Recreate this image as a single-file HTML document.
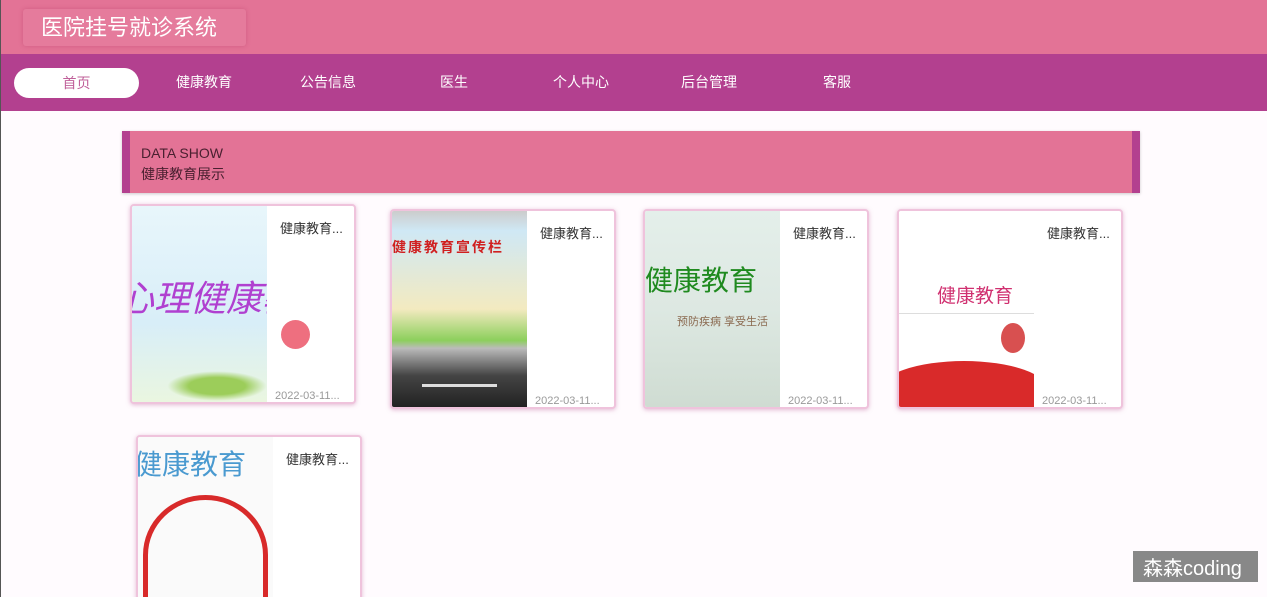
<!DOCTYPE html>
<html style="width:1267px;height:597px;overflow:hidden"><head><meta charset="utf-8"><style>
*{margin:0;padding:0;box-sizing:border-box}
html,body{width:1267px;height:597px;overflow:hidden}
body{background:#fffbfe;font-family:"Liberation Sans","Noto Sans CJK SC",sans-serif;position:relative;border-left:1px solid #555}
.hdr{position:absolute;left:0;top:0;width:1267px;height:54px;background:#e37396}
.title{position:absolute;left:22px;top:9px;width:223px;height:37px;background:#e57b9c;box-shadow:0 0 4px rgba(180,60,100,.4);color:#fff;font-size:22px;line-height:37px;padding-left:18px;border-radius:3px}
.nav{position:absolute;left:0;top:54px;width:1267px;height:57px;background:#b3408f}
.nav span{position:absolute;top:0;line-height:57px;color:#fff;font-size:14px}
.pill{position:absolute;left:13px;top:14px;width:125px;height:30px;background:#fff;border-radius:15px;color:#c0609a;text-align:center;line-height:30px;font-size:14px}
.ban{position:absolute;left:121px;top:131px;width:1018px;height:62px;background:#e37396;border-left:8px solid #b3408f;border-right:8px solid #b3408f;box-shadow:0 1px 3px rgba(0,0,0,.2);color:#4a2030;font-size:14px;padding:12px 0 0 11px;line-height:21px}
.card{position:absolute;width:226px;height:200px;background:#fff;border:2px solid #efc3dc;border-radius:4px;box-shadow:0 1px 4px rgba(200,120,170,.5);overflow:hidden}
.img{position:absolute;left:0;top:0;width:135px;height:100%;overflow:hidden}
.t{position:absolute;left:148px;top:12px;font-size:13px;color:#333}
.d{position:absolute;left:143px;top:184px;font-size:11px;color:#999}
</style></head><body>
<div class="hdr"><div class="title">医院挂号就诊系统</div></div>
<div class="nav"><div class="pill">首页</div>
<span style="left:175px">健康教育</span><span style="left:299px">公告信息</span><span style="left:439px">医生</span><span style="left:552px">个人中心</span><span style="left:680px">后台管理</span><span style="left:822px">客服</span></div>
<div class="ban">DATA SHOW<br>健康教育展示</div>

<div class="card" style="left:129px;top:204px">
<div class="img" style="background:linear-gradient(180deg,#e8f6fb,#d8eef8 60%,#eaf6e0)"><div style="position:absolute;left:-14px;top:64px;font-size:36px;color:#b040d0;font-style:italic;white-space:nowrap">心理健康教育</div><div style="position:absolute;left:35px;top:165px;width:100px;height:30px;background:radial-gradient(ellipse,#9ccd5a 40%,transparent 70%)"></div></div>
<div class="t">健康教育...</div><div class="d">2022-03-11...</div>
<div style="position:absolute;left:149px;top:114px;width:29px;height:29px;border-radius:50%;background:#ee6f7f"></div></div>

<div class="card" style="left:389px;top:209px">
<div class="img" style="background:linear-gradient(180deg,#ccc 0,#cfe8f5 10%,#f3eac0 50%,#8ccf5c 66%,#bbb 70%,#444 84%,#222)"><div style="position:absolute;left:0;top:26px;font-size:14px;font-weight:bold;color:#d02020;white-space:nowrap;letter-spacing:2px">健康教育宣传栏</div><div style="position:absolute;left:30px;top:173px;width:75px;height:3px;background:#ddd"></div></div>
<div class="t">健康教育...</div><div class="d">2022-03-11...</div></div>

<div class="card" style="left:642px;top:209px">
<div class="img" style="background:linear-gradient(180deg,#e4efea,#dde8e2 50%,#cfdcd2)"><div style="position:absolute;left:0;top:48px;font-size:28px;color:#1f8a1f;white-space:nowrap">健康教育</div><div style="position:absolute;left:32px;top:102px;font-size:11px;color:#8a6a50;white-space:nowrap">预防疾病 享受生活</div></div>
<div class="t">健康教育...</div><div class="d">2022-03-11...</div></div>

<div class="card" style="left:896px;top:209px">
<div class="img" style="background:#fff"><div style="position:absolute;left:38px;top:70px;font-size:19px;color:#d03070;white-space:nowrap">健康教育</div><div style="position:absolute;left:0;top:102px;width:135px;height:1px;background:#ddd"></div><div style="position:absolute;left:-20px;top:150px;width:170px;height:60px;border-radius:50% 50% 0 0;background:#d92a2a"></div><div style="position:absolute;left:102px;top:112px;width:24px;height:30px;border-radius:50%;background:#d85050"></div></div>
<div class="t">健康教育...</div><div class="d">2022-03-11...</div></div>

<div class="card" style="left:135px;top:435px;height:170px">
<div class="img" style="background:#fafafa"><div style="position:absolute;left:-4px;top:6px;font-size:28px;color:#4a9ad0;white-space:nowrap">健康教育</div><div style="position:absolute;left:5px;top:58px;width:125px;height:120px;border:5px solid #d82a2a;border-radius:50% 50% 10px 10px"></div></div>
<div class="t">健康教育...</div></div>

<div style="position:absolute;left:1132px;top:551px;width:125px;height:31px;background:#888;color:#fff;font-size:20px;line-height:36px;padding-left:10px;overflow:hidden">森森coding</div>
</body></html>
